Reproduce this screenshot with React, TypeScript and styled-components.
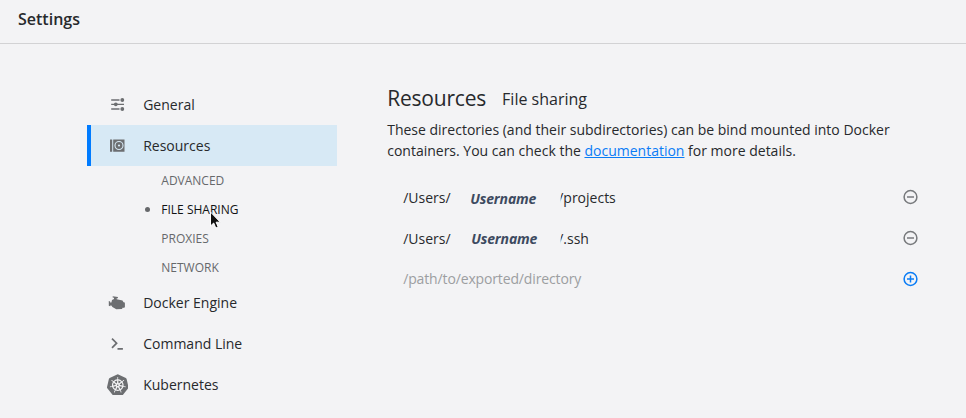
import React from "react";
import styled, { createGlobalStyle } from "styled-components";
import { SiKubernetes } from "react-icons/si";

const GlobalStyle = createGlobalStyle`
  * { box-sizing: border-box; }
  body {
    margin: 0;
    background: #f3f3f5;
    color: #27292c;
    font: 14px/21px "Open Sans", sans-serif;
    overflow: hidden;
  }
`;

const Window = styled.div`
  position: relative;
  height: 418px;
  overflow: hidden;
`;

const Header = styled.header`
  height: 44px;
  padding: 8px 18px 0;
  border-bottom: 1px solid #d2d2d4;
  font-size: 16px;
  font-weight: 600;
  line-height: 22px;
`;

const Content = styled.div`
  display: flex;
`;

const Sidebar = styled.nav`
  width: 250px;
  margin: 40px 50.2px 0 87px;
  flex: none;
`;

const NavItem = styled.div<{ $active?: boolean }>`
  height: 41px;
  display: flex;
  align-items: center;
  border-left: 4px solid ${(p) => (p.$active ? "#007bff" : "transparent")};
  background: ${(p) => (p.$active ? "#d7e9f5" : "transparent")};
`;

const IconSlot = styled.span`
  width: 52.2px;
  padding-left: 15px;
  display: flex;
  align-items: center;
  color: #6c6e71;
  flex: none;
`;

const NavLabel = styled.span`
  white-space: nowrap;
`;

const SubNav = styled.div`
  height: 116px;
`;

const SubItem = styled.div<{ $active?: boolean }>`
  height: 29px;
  display: flex;
  align-items: center;
  padding-left: 58px;
  font-size: 12px;
  color: ${(p) => (p.$active ? "#111214" : "#66686b")};
  &::before {
    content: "";
    width: 5px;
    height: 5px;
    margin-right: 11.3px;
    border-radius: 50%;
    background: ${(p) => (p.$active ? "#66686b" : "transparent")};
  }
`;

const Main = styled.main`
  width: 531px;
  padding-top: 38px;
`;

const Title = styled.h1`
  display: flex;
  align-items: flex-start;
  gap: 16px;
  height: 32px;
  margin: 0;
  font-size: 21px;
  font-weight: 400;
  line-height: 32px;
  letter-spacing: -0.2px;
`;

const Subtitle = styled.span`
  font-size: 16px;
  line-height: 34px;
  letter-spacing: 0;
`;

const Description = styled.p`
  margin: 5px 0 16px;
  white-space: nowrap;
`;

const DocLink = styled.a`
  color: #0a7cf5;
  text-decoration: underline;
`;

const PathRow = styled.div`
  height: 41px;
  display: flex;
  align-items: center;
  padding-left: 16px;
`;

const PathPrefix = styled.span`
  width: 67px;
`;

const Username = styled.span<{ $shift?: number }>`
  width: 88px;
  padding: ${(p) => (p.$shift ? 0 : 2)}px 0 0 ${(p) => p.$shift ?? 0}px;
  color: #3d4a60;
  font-weight: 700;
  font-style: italic;
  letter-spacing: -0.15px;
`;

const PathSuffix = styled.span`
  flex: 1;
  clip-path: inset(0 0 0 2.5px);
`;

const Placeholder = styled.span`
  flex: 1;
  margin-bottom: 2px;
  color: #9c9ea1;
  letter-spacing: -0.14px;
`;

const RoundButton = styled.button<{ $add?: boolean }>`
  width: 16px;
  height: 16px;
  margin: 0 0 2px;
  padding: 0;
  border: 0;
  background: none;
  display: flex;
  color: ${(p) => (p.$add ? "#0a7cf5" : "#77797c")};
`;

const Pointer = styled.svg`
  position: absolute;
  left: 209px;
  top: 211px;
`;

const SlidersIcon = () => (
  <svg width="24" height="22" viewBox="0 0 24 22" fill="none" stroke="currentColor" strokeWidth="1.3">
    <path d="M5.2 6h8.3M5.2 10.3h12.8M5.2 15h8.3M16 6h2M16 15h2" />
    <g fill="currentColor" stroke="none">
      <circle cx="16.3" cy="6" r="1.9" />
      <circle cx="9.8" cy="10.3" r="1.9" />
      <circle cx="16.3" cy="15" r="1.9" />
    </g>
  </svg>
);

const DiskIcon = () => (
  <svg width="24" height="22" viewBox="0 0 24 22">
    <path d="M4 4.5h2.2v12.3H4zM7.2 4.5h11.3v12.3H7.2z" fill="currentColor" />
    <circle cx="13" cy="10.5" r="4" fill="none" stroke="#d7e9f5" strokeWidth="1.1" />
    <circle cx="13" cy="10.5" r="1.1" fill="#d7e9f5" />
  </svg>
);

const EngineIcon = () => (
  <svg width="24" height="22" viewBox="0 0 24 22" fill="currentColor">
    <path transform="translate(-.8 0)" d="M7.5 4.2l5.2.8v1.3l-1.2-.1v1l5.8 1.3 1 1.7h.9l.5 1v3.8l-.9.9-1.1-.4-1 1.4-5.6.3-3.9-2.1-1-1.6H5v.8l-1.4-.6V9.1l1.4.3v1h1.2l.6-2.5 2-.9V5.8l-1.3-.2z" />
  </svg>
);

const PromptIcon = () => (
  <svg width="24" height="22" viewBox="0 0 24 22" fill="none" stroke="currentColor" strokeWidth="1.7">
    <path d="M6 5.6l4.6 4.6L6 14.8M11.5 15.8h5.4" />
  </svg>
);

const CircleIcon = ({ add }: { add?: boolean }) => (
  <svg width="16" height="16" viewBox="0 0 16 16" fill="none" stroke="currentColor" strokeWidth="1.5">
    <circle cx="8.5" cy="8" r="6.4" />
    <path d={add ? "M5 8h7M8.5 4.5v7" : "M5 8h7"} />
  </svg>
);

const KubernetesIcon = styled(SiKubernetes)`
  width: 21.5px;
  height: 21.5px;
  margin-left: 0.5px;
`;

export default function App() {
  return (
    <Window>
      <GlobalStyle />
      <Header>Settings</Header>
      <Content>
        <Sidebar>
          <NavItem><IconSlot><SlidersIcon /></IconSlot><NavLabel>General</NavLabel></NavItem>
          <NavItem $active><IconSlot><DiskIcon /></IconSlot><NavLabel>Resources</NavLabel></NavItem>
          <SubNav>
            <SubItem>ADVANCED</SubItem>
            <SubItem $active>FILE SHARING</SubItem>
            <SubItem>PROXIES</SubItem>
            <SubItem>NETWORK</SubItem>
          </SubNav>
          <NavItem><IconSlot><EngineIcon /></IconSlot><NavLabel>Docker Engine</NavLabel></NavItem>
          <NavItem><IconSlot><PromptIcon /></IconSlot><NavLabel>Command Line</NavLabel></NavItem>
          <NavItem><IconSlot><KubernetesIcon /></IconSlot><NavLabel>Kubernetes</NavLabel></NavItem>
        </Sidebar>
        <Main>
          <Title>Resources <Subtitle>File sharing</Subtitle></Title>
          <Description>
            These directories (and their subdirectories) can be bind mounted into Docker<br />
            containers. You can check the <DocLink>documentation</DocLink> for more details.
          </Description>
          <PathRow>
            <PathPrefix>/Users/</PathPrefix>
            <Username>Username</Username>
            <PathSuffix>/projects</PathSuffix>
            <RoundButton aria-label="Remove"><CircleIcon /></RoundButton>
          </PathRow>
          <PathRow>
            <PathPrefix>/Users/</PathPrefix>
            <Username $shift={1}>Username</Username>
            <PathSuffix>/.ssh</PathSuffix>
            <RoundButton aria-label="Remove"><CircleIcon /></RoundButton>
          </PathRow>
          <PathRow>
            <Placeholder>/path/to/exported/directory</Placeholder>
            <RoundButton $add aria-label="Add"><CircleIcon add /></RoundButton>
          </PathRow>
        </Main>
      </Content>
      <Pointer width="12" height="19" viewBox="0 0 12 19">
        <path d="M1.5 1v14l3.2-3 2.1 5 2.4-1-2.1-4.8h4.2z" fill="#111" stroke="#fff" strokeWidth="1" />
      </Pointer>
    </Window>
  );
}
